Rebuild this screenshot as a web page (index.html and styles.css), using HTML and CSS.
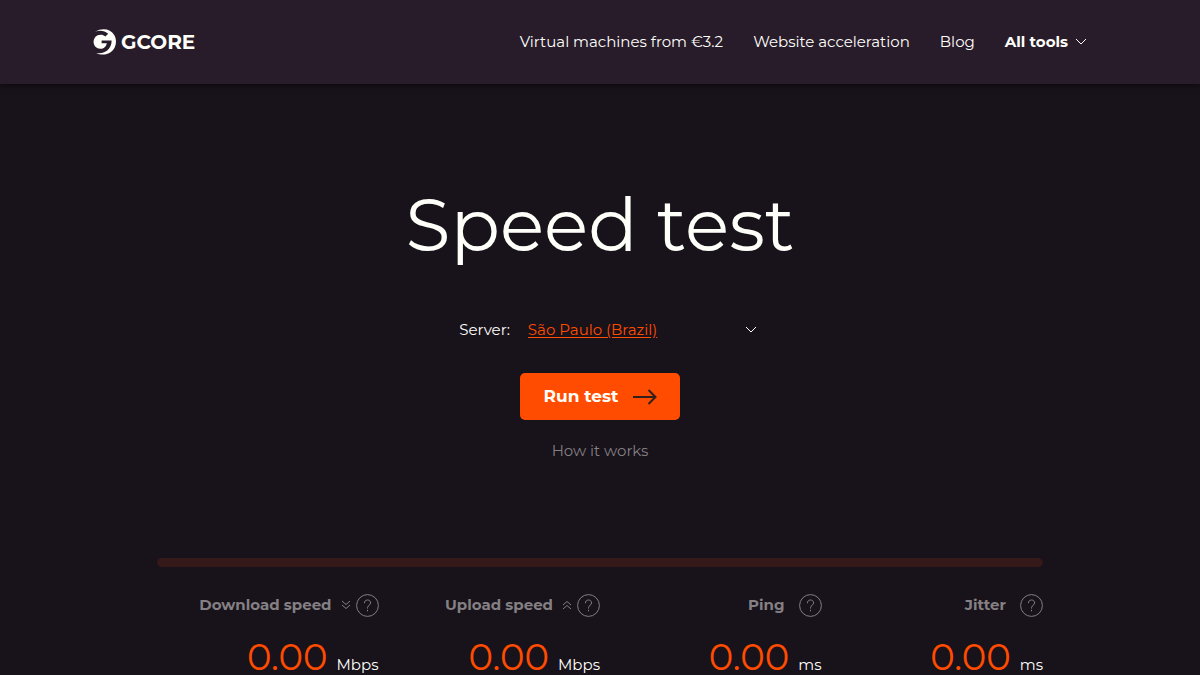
FILE: index.html
```
<!DOCTYPE html>
<html lang="en">
<head>
  <meta charset="UTF-8">
  <meta name="viewport" content="width=device-width, initial-scale=1.0">
  <title>Speed test | Gcore</title>
  <link rel="stylesheet" href="styles.css">
</head>
<body>
  <header class="header">
    <a class="logo" href="#">
      <svg class="logo-mark" viewBox="0 0 24 28" aria-hidden="true">
        <path d="M2 3.800C9-.200 17.500.600 21.200 7c3.400 5.800 1.800 13.600-3.600 17.300-4.400 3-10.400 2.900-14.400.700 5.200.800 9.800-.500 12.700-4.200 2-2.500 2.700-5.300 2.700-8.300H8.600v2.700h5.200c-.600 3.300-3 5.600-6.500 5.600-3.900 0-6.700-3-6.700-6.700C.600 10 3.400 6.800 7.500 6.800c2 0 3.400.500 4.800 1.600l2.900-2.600C11.600 2.600 6.600 2.100 2 3.800z"/>
      </svg>
      <span class="logo-name">GCORE</span>
    </a>
    <nav class="nav">
      <a class="nav-link" href="#">Virtual machines from €3.2</a>
      <a class="nav-link" href="#">Website acceleration</a>
      <a class="nav-link" href="#">Blog</a>
      <button class="nav-tools" type="button">
        All tools
        <svg class="chevron" viewBox="0 0 12 8" aria-hidden="true"><path d="M1 1l5 5 5-5"/></svg>
      </button>
    </nav>
  </header>

  <main class="main">
    <h1 class="title">Speed test</h1>

    <div class="server">
      <label class="server-label" for="server">Server:</label>
      <div class="server-field">
        <select class="server-select" id="server">
          <option>São Paulo (Brazil)</option>
        </select>
        <svg class="chevron server-chevron" viewBox="0 0 12 8" aria-hidden="true"><path d="M1 1l5 5 5-5"/></svg>
      </div>
    </div>

    <button class="run" type="button">
      Run test
      <svg class="run-arrow" viewBox="0 0 24 16" aria-hidden="true"><path d="M0 9h22M15.500 2l7 7-7 7"/></svg>
    </button>

    <a class="how" href="#">How it works</a>

    <section class="results">
      <div class="progress"></div>
      <div class="metrics">
        <div class="metric">
          <div class="metric-head">
            <h2 class="metric-name">Download speed</h2>
            <svg class="metric-dir" viewBox="0 0 10 10" aria-hidden="true"><path d="M1 1l4 3.500L9 1M1 5l4 3.500L9 5"/></svg>
            <button class="help" type="button" aria-label="About download speed">
              <svg class="help-icon" viewBox="0 0 23 23" aria-hidden="true"><circle cx="11.500" cy="11.500" r="10.900"/><path d="M8.400 9.200c0-2 1.300-3.200 3.100-3.200s3.100 1.200 3.100 2.900c0 2.300-3.100 2.500-3.100 4.900v.7M11.500 15.800v1.500"/></svg>
            </button>
          </div>
          <div class="metric-value"><span class="number">0.00</span><span class="unit">Mbps</span></div>
        </div>

        <div class="metric">
          <div class="metric-head">
            <h2 class="metric-name">Upload speed</h2>
            <svg class="metric-dir" viewBox="0 0 10 10" aria-hidden="true"><path d="M1 5l4-3.500L9 5M1 9l4-3.500L9 9"/></svg>
            <button class="help" type="button" aria-label="About upload speed">
              <svg class="help-icon" viewBox="0 0 23 23" aria-hidden="true"><circle cx="11.500" cy="11.500" r="10.900"/><path d="M8.400 9.200c0-2 1.300-3.200 3.100-3.200s3.100 1.200 3.100 2.900c0 2.300-3.100 2.500-3.100 4.900v.7M11.500 15.800v1.500"/></svg>
            </button>
          </div>
          <div class="metric-value"><span class="number">0.00</span><span class="unit">Mbps</span></div>
        </div>

        <div class="metric">
          <div class="metric-head metric-head-wide">
            <h2 class="metric-name">Ping</h2>
            <button class="help" type="button" aria-label="About ping">
              <svg class="help-icon" viewBox="0 0 23 23" aria-hidden="true"><circle cx="11.500" cy="11.500" r="10.900"/><path d="M8.400 9.200c0-2 1.300-3.200 3.100-3.200s3.100 1.200 3.100 2.900c0 2.300-3.100 2.500-3.100 4.900v.7M11.500 15.800v1.500"/></svg>
            </button>
          </div>
          <div class="metric-value"><span class="number">0.00</span><span class="unit">ms</span></div>
        </div>

        <div class="metric">
          <div class="metric-head metric-head-wide">
            <h2 class="metric-name">Jitter</h2>
            <button class="help" type="button" aria-label="About jitter">
              <svg class="help-icon" viewBox="0 0 23 23" aria-hidden="true"><circle cx="11.500" cy="11.500" r="10.900"/><path d="M8.400 9.200c0-2 1.300-3.200 3.100-3.200s3.100 1.200 3.100 2.900c0 2.300-3.100 2.500-3.100 4.900v.7M11.500 15.800v1.500"/></svg>
            </button>
          </div>
          <div class="metric-value"><span class="number">0.00</span><span class="unit">ms</span></div>
        </div>
      </div>
    </section>
  </main>
</body>
</html>
```
FILE: styles.css
```
:root {
  --bg: #18121a;
  --header-bg: #281c2b;
  --text: #fffffa;
  --muted: #848084;
  --accent: #ff4c00;
  --track: #351918;
}

* {
  box-sizing: border-box;
}

body {
  margin: 0;
  background: var(--bg);
  color: var(--text);
  font-family: Montserrat, Inter, sans-serif;
  font-size: 15px;
  line-height: 24px;
}

a {
  color: inherit;
  text-decoration: none;
}

button,
select {
  font: inherit;
  color: inherit;
  background: none;
  border: none;
  padding: 0;
  cursor: pointer;
}

svg {
  display: block;
  flex: none;
  fill: none;
  stroke: currentColor;
}

/* header */
.header {
  display: flex;
  align-items: center;
  justify-content: space-between;
  min-height: 84px;
  padding: 0 113px 0 93px;
  background: var(--header-bg);
  box-shadow: 0 2px 6px rgba(0, 0, 0, 0.5);
}

.logo {
  display: flex;
  align-items: center;
  gap: 4px;
}

.logo-mark {
  width: 24px;
  height: 28px;
  fill: currentColor;
  stroke: none;
}

.logo-name {
  font-size: 20px;
  font-weight: 700;
}

.nav {
  display: flex;
  align-items: center;
  gap: 30px;
}

.nav-tools {
  display: flex;
  align-items: center;
  gap: 7px;
  font-weight: 700;
}

.chevron {
  width: 12px;
  height: 8px;
}

/* start screen */
.main {
  display: flex;
  flex-direction: column;
  align-items: center;
}

.title {
  margin: 97px 0 0;
  font-size: 73px;
  font-weight: 400;
  line-height: 88px;
}

.server {
  display: flex;
  align-items: center;
  gap: 18px;
  margin-top: 49px;
  padding-left: 16px;
}

.server-field {
  position: relative;
  width: 229px;
}

.server-select {
  width: 100%;
  height: 24px;
  appearance: none;
  color: var(--accent);
  text-decoration: underline;
  text-underline-offset: 2px;
}

.server-chevron {
  position: absolute;
  right: 0;
  top: 8px;
  pointer-events: none;
}

.run {
  display: flex;
  align-items: center;
  justify-content: center;
  gap: 14px;
  min-width: 160px;
  margin-top: 31px;
  padding: 11px 23px 12px;
  border-radius: 5px;
  background: var(--accent);
  font-size: 17px;
  font-weight: 700;
}

.run:hover {
  background: #e64500;
}

.run-arrow {
  width: 24px;
  height: 16px;
  overflow: visible;
  color: #32201f;
  stroke-width: 2;
}

.how {
  margin-top: 19px;
  color: var(--muted);
}

/* results */
.results {
  width: 100%;
  max-width: 886px;
  margin-top: 95px;
}

.progress {
  height: 9px;
  border-radius: 5px;
  background: var(--track);
}

.metrics {
  display: grid;
  grid-template-columns: repeat(4, 1fr);
  margin-top: 26px;
}

.metric-head {
  display: flex;
  align-items: center;
  justify-content: flex-end;
  gap: 5px;
  height: 24px;
  color: var(--muted);
}

.metric-head-wide {
  gap: 14px;
}

.metric-name {
  margin: 0 4px 0 0;
  font-size: 15px;
  font-weight: 700;
}

.metric-head-wide .metric-name {
  margin: 0;
}

.metric-dir {
  width: 10px;
  height: 10px;
}

.help-icon {
  width: 23px;
  height: 23px;
}

.metric-value {
  display: flex;
  align-items: baseline;
  justify-content: flex-end;
  gap: 9px;
  margin-top: 21px;
}

.number {
  color: var(--accent);
  font-size: 37px;
  line-height: 37px;
}
```
